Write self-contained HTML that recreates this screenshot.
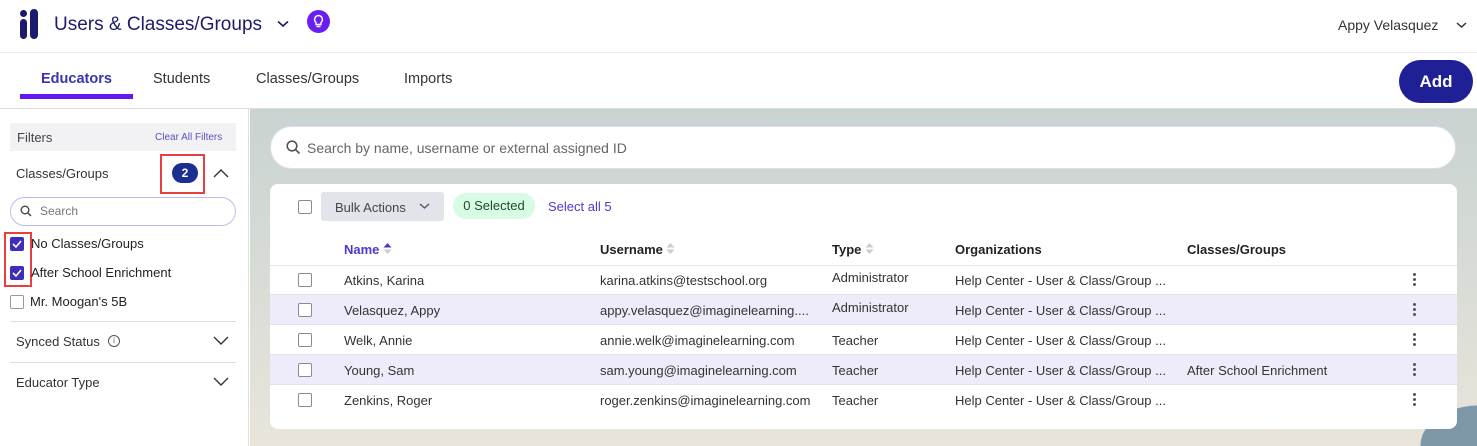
<!DOCTYPE html>
<html style="width:1477px;height:446px;overflow:hidden"><head><style>
*{box-sizing:border-box;margin:0;padding:0}
body{width:1477px;height:446px;overflow:hidden;font-family:"Liberation Sans",sans-serif;background:#fff;position:relative;color:#222}
.a{position:absolute;white-space:nowrap}
.cb{position:absolute;width:14px;height:14px;border:1.5px solid #8a8a95;border-radius:2px;background:#fff}
.cbc{position:absolute;width:14px;height:14px;border-radius:2px;background:#3d2db8}
.row{position:absolute;left:0;width:1187px;height:30px;border-bottom:1px solid #e2e2e8;font-size:13px;color:#333}
.row span{position:absolute;top:8px}
.alt{background:#eeecfa}
.dots{position:absolute;left:1143px;top:8px;width:3px}
.dots i{display:block;width:3px;height:3px;background:#555;border-radius:50%;margin-bottom:2px}
</style></head><body>
<div class="a" style="left:20px;top:10px;width:7px;height:7px;border-radius:50%;background:#1a1a6e"></div>
<div class="a" style="left:20px;top:19px;width:7px;height:20px;border-radius:4px;background:#1a1a6e"></div>
<div class="a" style="left:30px;top:9px;width:8px;height:30px;border-radius:4px;background:#1a1a6e"></div>
<div class="a" style="left:54px;top:14px;font-size:19px;color:#1c1c6b">Users &amp; Classes/Groups</div>
<svg class="a" style="left:277px;top:20px" width="12" height="8"><path d="M1 1.5l5 4.5 5-4.5" stroke="#1c1c6b" stroke-width="1.6" fill="none"/></svg>
<div class="a" style="left:307px;top:10px;width:23px;height:23px;border-radius:50%;background:#6a1ef0"></div>
<svg class="a" style="left:312px;top:14px" width="13" height="15"><path d="M6.5 1.5a4 4 0 0 0-2.5 7v2h5v-2a4 4 0 0 0-2.5-7zM4.5 12.5h4" stroke="#fff" stroke-width="1.4" fill="none"/></svg>
<div class="a" style="left:1338px;top:17px;font-size:14px;color:#333">Appy Velasquez</div>
<svg class="a" style="left:1456px;top:22px" width="11" height="7"><path d="M1 1l4.5 4 4.5-4" stroke="#333" stroke-width="1.5" fill="none"/></svg>
<div class="a" style="left:0;top:52px;width:1477px;height:1px;background:#ececec"></div>
<div class="a" style="left:41px;top:71px;font-size:14.5px;color:#3d33b0;font-weight:bold">Educators</div>
<div class="a" style="left:153px;top:71px;font-size:14.5px;color:#333">Students</div>
<div class="a" style="left:256px;top:71px;font-size:14.5px;color:#333">Classes/Groups</div>
<div class="a" style="left:404px;top:71px;font-size:14.5px;color:#333">Imports</div>
<div class="a" style="left:20px;top:94px;width:113px;height:5px;background:#6319f2"></div>
<div class="a" style="left:1399px;top:60px;width:74px;height:43px;border-radius:22px;background:#1f1f96;color:#fff;font-weight:bold;font-size:17px;text-align:center;line-height:43px">Add</div>
<div class="a" style="left:0;top:108px;width:1477px;height:1px;background:#ddd"></div>
<div class="a" style="left:0;top:109px;width:249px;height:337px;background:#fff;border-right:1px solid #e0e0e0"></div>
<div class="a" style="left:10px;top:123px;width:226px;height:28px;background:#f2f2f4"></div>
<div class="a" style="left:17px;top:130px;font-size:13px;color:#444">Filters</div>
<div class="a" style="left:155px;top:132px;font-size:10px;color:#5a52c0">Clear All Filters</div>
<div class="a" style="left:16px;top:166px;font-size:13px;color:#333">Classes/Groups</div>
<div class="a" style="left:160px;top:154px;width:45px;height:40px;border:2px solid #e84040"></div>
<div class="a" style="left:172px;top:163px;width:26px;height:20px;border-radius:10px;background:#1a2f8f;color:#fff;font-size:12px;font-weight:bold;text-align:center;line-height:20px">2</div>
<svg class="a" style="left:213px;top:168px" width="16" height="10"><path d="M1 9l7-7 7 7" stroke="#333" stroke-width="1.4" fill="none"/></svg>
<div class="a" style="left:10px;top:197px;width:226px;height:29px;border:1px solid #b8bff0;border-radius:15px"></div>
<svg class="a" style="left:20px;top:205px" width="12" height="12"><circle cx="5" cy="5" r="3.8" stroke="#444" stroke-width="1.4" fill="none"/><path d="M8 8l3 3" stroke="#444" stroke-width="1.4"/></svg>
<div class="a" style="left:40px;top:204px;font-size:12px;color:#777">Search</div>
<div class="a" style="left:4px;top:232px;width:28px;height:55px;border:2px solid #e84040"></div>
<div class="cbc" style="left:10px;top:237px"></div><svg class="a" style="left:12px;top:240px" width="10" height="8"><path d="M1 4l3 3 5-6" stroke="#fff" stroke-width="1.6" fill="none"/></svg>
<div class="cbc" style="left:10px;top:266px"></div><svg class="a" style="left:12px;top:269px" width="10" height="8"><path d="M1 4l3 3 5-6" stroke="#fff" stroke-width="1.6" fill="none"/></svg>
<div class="cb" style="left:10px;top:295px;border-color:#999"></div>
<div class="a" style="left:31px;top:236px;font-size:13px;color:#222">No Classes/Groups</div>
<div class="a" style="left:31px;top:265px;font-size:13px;color:#222">After School Enrichment</div>
<div class="a" style="left:30px;top:294px;font-size:13px;color:#222">Mr. Moogan's 5B</div>
<div class="a" style="left:10px;top:321px;width:226px;height:1px;background:#ddd"></div>
<div class="a" style="left:16px;top:334px;font-size:13px;color:#333">Synced Status</div>
<div class="a" style="left:108px;top:335px;width:12px;height:12px;border:1px solid #555;border-radius:50%;font-size:8px;text-align:center;line-height:10px;color:#555">i</div>
<svg class="a" style="left:213px;top:336px" width="16" height="10"><path d="M1 1l7 7 7-7" stroke="#333" stroke-width="1.4" fill="none"/></svg>
<div class="a" style="left:10px;top:362px;width:226px;height:1px;background:#ddd"></div>
<div class="a" style="left:16px;top:375px;font-size:13px;color:#333">Educator Type</div>
<svg class="a" style="left:213px;top:377px" width="16" height="10"><path d="M1 1l7 7 7-7" stroke="#333" stroke-width="1.4" fill="none"/></svg>
<div class="a" style="left:250px;top:109px;width:1227px;height:337px;background:radial-gradient(ellipse 60px 40px at 1230px 336px,#7d97a8 98%,transparent 100%),linear-gradient(180deg,#c9d3d1 0%,#d8dcd6 50%,#e9e5da 100%)"></div>
<div class="a" style="left:270px;top:126px;width:1186px;height:43px;border-radius:22px;background:#fff;border:1px solid #dde"></div>
<svg class="a" style="left:286px;top:140px" width="15" height="15"><circle cx="6" cy="6" r="4.8" stroke="#555" stroke-width="1.6" fill="none"/><path d="M9.5 9.5l4 4" stroke="#555" stroke-width="1.6"/></svg>
<div class="a" style="left:307px;top:140px;font-size:14px;color:#666">Search by name, username or external assigned ID</div>
<div class="a" style="left:270px;top:184px;width:1187px;height:245px;background:#fff;border-radius:8px">
 <div class="cb" style="left:28px;top:16px"></div>
 <div class="a" style="left:51px;top:8px;width:123px;height:29px;background:#e1e4e8;border-radius:3px;font-size:13px;color:#444;padding:8px 0 0 14px">Bulk Actions</div>
 <svg class="a" style="left:149px;top:19px" width="11" height="7"><path d="M1 1l4.5 4 4.5-4" stroke="#555" stroke-width="1.4" fill="none"/></svg>
 <div class="a" style="left:183px;top:9px;width:82px;height:26px;background:#d7fbe3;border-radius:13px;font-size:13px;color:#1d4d2a;text-align:center;line-height:26px">0 Selected</div>
 <div class="a" style="left:278px;top:15px;font-size:13px;color:#4a3ad0">Select all 5</div>
 <div class="a" style="left:74px;top:58px;font-size:13px;color:#4a3ad0;font-weight:bold">Name</div>
 <svg class="a" style="left:113px;top:58px" width="9" height="13"><path d="M0.5 5.5L4.5 1l4 4.5z" fill="#4a3ad0"/><path d="M0.5 7.5L4.5 12l4-4.5z" fill="#ccc"/></svg>
 <div class="a" style="left:330px;top:58px;font-size:13px;color:#222;font-weight:bold">Username</div>
 <svg class="a" style="left:396px;top:58px" width="9" height="13"><path d="M0.5 5.5L4.5 1l4 4.5zM0.5 7.5L4.5 12l4-4.5z" fill="#ccc"/></svg>
 <div class="a" style="left:562px;top:58px;font-size:13px;color:#222;font-weight:bold">Type</div>
 <svg class="a" style="left:595px;top:58px" width="9" height="13"><path d="M0.5 5.5L4.5 1l4 4.5zM0.5 7.5L4.5 12l4-4.5z" fill="#ccc"/></svg>
 <div class="a" style="left:685px;top:58px;font-size:13px;color:#222;font-weight:bold">Organizations</div>
 <div class="a" style="left:917px;top:58px;font-size:13px;color:#222;font-weight:bold">Classes/Groups</div>
 <div class="a" style="left:0;top:81px;width:1187px;height:1px;background:#e6e6ea"></div>
 <div class="row" style="top:81px"><div class="cb" style="left:28px;top:8px"></div><span style="left:74px">Atkins, Karina</span><span style="left:330px">karina.atkins@testschool.org</span><span style="left:562px;top:5px">Administrator</span><span style="left:685px">Help Center - User &amp; Class/Group ...</span><div class="dots"><i></i><i></i><i></i></div></div>
 <div class="row alt" style="top:111px"><div class="cb" style="left:28px;top:8px"></div><span style="left:74px">Velasquez, Appy</span><span style="left:330px">appy.velasquez@imaginelearning....</span><span style="left:562px;top:5px">Administrator</span><span style="left:685px">Help Center - User &amp; Class/Group ...</span><div class="dots"><i></i><i></i><i></i></div></div>
 <div class="row" style="top:141px"><div class="cb" style="left:28px;top:8px"></div><span style="left:74px">Welk, Annie</span><span style="left:330px">annie.welk@imaginelearning.com</span><span style="left:562px">Teacher</span><span style="left:685px">Help Center - User &amp; Class/Group ...</span><div class="dots"><i></i><i></i><i></i></div></div>
 <div class="row alt" style="top:171px"><div class="cb" style="left:28px;top:8px"></div><span style="left:74px">Young, Sam</span><span style="left:330px">sam.young@imaginelearning.com</span><span style="left:562px">Teacher</span><span style="left:685px">Help Center - User &amp; Class/Group ...</span><span style="left:917px">After School Enrichment</span><div class="dots"><i></i><i></i><i></i></div></div>
 <div class="row" style="top:201px;border-bottom:none"><div class="cb" style="left:28px;top:8px"></div><span style="left:74px">Zenkins, Roger</span><span style="left:330px">roger.zenkins@imaginelearning.com</span><span style="left:562px">Teacher</span><span style="left:685px">Help Center - User &amp; Class/Group ...</span><div class="dots"><i></i><i></i><i></i></div></div>
</div>
</body></html>
